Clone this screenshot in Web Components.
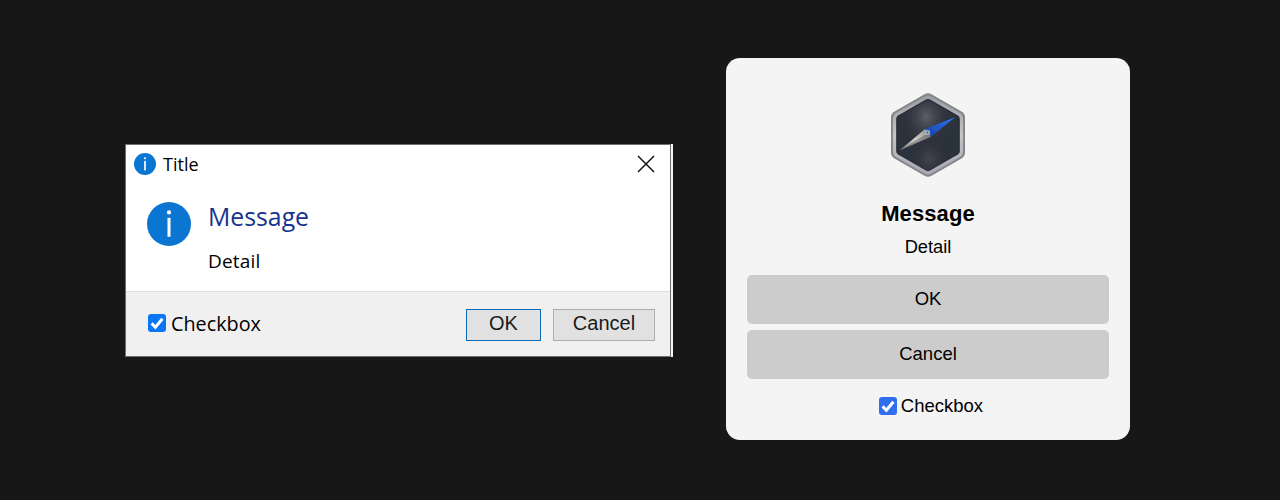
<!DOCTYPE html>
<html>
<head>
<meta charset="utf-8">
<title>Message box</title>
<style>
    html, body { margin: 0; height: 100%; }
    body {
        width: 1280px;
        height: 500px;
        overflow: hidden;
        background: #171717;
        display: flex;
        align-items: flex-start;
        gap: 53px;
        padding-left: 125px;
        box-sizing: border-box;
    }
</style>
</head>
<body>
<win-dialog title-text="Title" message="Message" detail="Detail" check="Checkbox"></win-dialog>
<mac-dialog message="Message" detail="Detail" check="Checkbox"></mac-dialog>

<script>
const INFO_ICON = (size, stem) => `
    <svg width="${size}" height="${size}" viewBox="0 0 44 44" style="display:block;flex:none">
        <circle cx="22" cy="22" r="22" fill="#0a76d1"/>
        <circle cx="22" cy="10.4" r="2.1" fill="#fff"/>
        <rect x="${22 - stem / 2}" y="15.8" width="${stem}" height="19" fill="#fff"/>
    </svg>`;

class TickBox extends HTMLElement {
    constructor() {
        super();
        this.attachShadow({ mode: 'open' });
        this.shadowRoot.innerHTML = `
            <style>
                :host {
                    display: inline-flex;
                    align-items: center;
                    gap: var(--tick-gap, 6px);
                }
                .box {
                    width: 18px;
                    height: 18px;
                    border-radius: 3px;
                    background: var(--tick-color, #0a75f5);
                    flex: none;
                }
                svg { display: block; }
            </style>
            <span class="box">
                <svg width="18" height="18" viewBox="0 0 18 18">
                    <path d="M3.6 9.4 L7.4 13.2 L14.4 4.8" fill="none" stroke="#fff" stroke-width="3"/>
                </svg>
            </span>
            <slot></slot>`;
    }
}
customElements.define('tick-box', TickBox);

class WinButton extends HTMLElement {
    constructor() {
        super();
        this.attachShadow({ mode: 'open' });
        this.shadowRoot.innerHTML = `
            <style>
                :host {
                    display: flex;
                    align-items: center;
                    justify-content: center;
                    box-sizing: border-box;
                    height: 32px;
                    padding-bottom: 3px;
                    background: #e1e1e1;
                    border: 1px solid #adadad;
                    font: 20px "Liberation Sans", Arial, sans-serif;
                    color: #1a1a1a;
                }
                :host([default]) { border-color: #0a6cb8; }
            </style>
            <slot></slot>`;
    }
}
customElements.define('win-button', WinButton);

class WinDialog extends HTMLElement {
    constructor() {
        super();
        this.attachShadow({ mode: 'open' });
        this.shadowRoot.innerHTML = `
            <style>
                :host {
                    display: block;
                    box-sizing: border-box;
                    width: 548px;
                    height: 213px;
                    margin-top: 144px;
                    padding-right: 2px;
                    background: #f6f6f6;
                    font-family: "Open Sans", "Noto Sans", sans-serif;
                    color: #000;
                }
                .frame {
                    height: 100%;
                    box-sizing: border-box;
                    background: #fff;
                    border: 1px solid #6e6e6e;
                }
                .title {
                    display: flex;
                    align-items: center;
                    height: 38px;
                    padding: 0 15px 0 8px;
                }
                .title span {
                    flex: 1;
                    margin-left: 7px;
                    font-size: 18px;
                    letter-spacing: 0.05px;
                    padding-bottom: 1px;
                }
                .main {
                    display: flex;
                    height: 108px;
                    box-sizing: border-box;
                    padding: 19px 0 0 21px;
                    gap: 17px;
                }
                .text { margin-top: -2px; }
                .msg {
                    font-size: 24.8px;
                    line-height: 32px;
                    color: #17348f;
                }
                .detail {
                    margin-top: 17px;
                    font-size: 19px;
                    line-height: 24px;
                    letter-spacing: 0.2px;
                }
                .foot {
                    display: flex;
                    align-items: center;
                    height: 65px;
                    box-sizing: border-box;
                    background: #f0f0f0;
                    border-top: 1px solid #dcdcdc;
                    padding: 2px 15px 0 22px;
                }
                tick-box {
                    flex: 1;
                    margin-bottom: 4px;
                    font-size: 19.8px;
                    --tick-gap: 5px;
                }
                .ok { width: 75px; }
                .cancel { width: 102px; margin-left: 12px; }
            </style>
            <div class="frame">
                <div class="title">
                    ${INFO_ICON(22, 3.4)}
                    <span>${this.getAttribute('title-text')}</span>
                    <svg width="18" height="18" viewBox="0 0 18 18">
                        <path d="M1 1 L17 17 M17 1 L1 17" stroke="#111" stroke-width="1.5" fill="none"/>
                    </svg>
                </div>
                <div class="main">
                    ${INFO_ICON(44, 3)}
                    <div class="text">
                        <div class="msg">${this.getAttribute('message')}</div>
                        <div class="detail">${this.getAttribute('detail')}</div>
                    </div>
                </div>
                <div class="foot">
                    <tick-box>${this.getAttribute('check')}</tick-box>
                    <win-button class="ok" default>OK</win-button>
                    <win-button class="cancel">Cancel</win-button>
                </div>
            </div>`;
    }
}
customElements.define('win-dialog', WinDialog);

class CompassBadge extends HTMLElement {
    constructor() {
        super();
        this.attachShadow({ mode: 'open' });
        this.shadowRoot.innerHTML = `
            <style>
                :host { display: block; width: 76px; height: 86px; }
                svg { display: block; }
            </style>
            <svg width="76" height="86" viewBox="0 0 76 86">
                <defs>
                    <linearGradient id="rim" x1="0" y1="0" x2="0" y2="1">
                        <stop offset="0" stop-color="#9b9ca0"/>
                        <stop offset="0.5" stop-color="#c4c4c6"/>
                        <stop offset="1" stop-color="#a6a6b0"/>
                    </linearGradient>
                    <radialGradient id="glowTop" cx="0.47" cy="0.24" r="0.42">
                        <stop offset="0" stop-color="#5d6069"/>
                        <stop offset="1" stop-color="#30343e" stop-opacity="0"/>
                    </radialGradient>
                    <radialGradient id="glowLow" cx="0.52" cy="0.84" r="0.3">
                        <stop offset="0" stop-color="#43464f"/>
                        <stop offset="1" stop-color="#30343e" stop-opacity="0"/>
                    </radialGradient>
                    <linearGradient id="blue" x1="0" y1="1" x2="1" y2="0">
                        <stop offset="0" stop-color="#1a3fa6"/>
                        <stop offset="1" stop-color="#2c7af5"/>
                    </linearGradient>
                    <linearGradient id="steel" x1="1" y1="0" x2="0" y2="1">
                        <stop offset="0" stop-color="#8a8b8e"/>
                        <stop offset="0.5" stop-color="#d0cdc6"/>
                        <stop offset="1" stop-color="#85837e"/>
                    </linearGradient>
                    <filter id="soft"><feGaussianBlur stdDeviation="0.7"/></filter>
                </defs>
                <g filter="url(#soft)">
                    <path d="M34.5 2.2 Q38 0.5 41.5 2.2 L71.5 19.6 Q75 21.6 75 25.5 L75 60.5 Q75 64.4 71.5 66.4 L41.5 83.8 Q38 85.5 34.5 83.8 L4.5 66.4 Q1 64.4 1 60.5 L1 25.5 Q1 21.6 4.5 19.6 Z" fill="#85868c"/>
                    <path d="M35.5 4 Q38 2.8 40.5 4 L70 21 Q73 22.8 73 26 L73 60 Q73 63.2 70 65 L40.5 82 Q38 83.2 35.5 82 L6 65 Q3 63.2 3 60 L3 26 Q3 22.8 6 21 Z" fill="url(#rim)"/>
                    <path d="M36 7.4 Q38 6.4 40 7.4 L67.8 23.4 Q69.8 24.6 69.8 27 L69.8 59 Q69.8 61.4 67.8 62.6 L40 78.6 Q38 79.6 36 78.6 L8.2 62.6 Q6.2 61.4 6.2 59 L6.2 27 Q6.2 24.6 8.2 23.4 Z" fill="#23262f"/>
                    <path d="M36 8.6 Q38 7.6 40 8.6 L67 24.2 Q68.8 25.3 68.8 27.4 L68.8 58.6 Q68.8 60.7 67 61.8 L40 77.4 Q38 78.4 36 77.4 L9 61.8 Q7.2 60.7 7.2 58.6 L7.2 27.4 Q7.2 25.3 9 24.2 Z" fill="#2c303a"/>
                    <path d="M36 8.6 Q38 7.6 40 8.6 L67 24.2 Q68.8 25.3 68.8 27.4 L68.8 58.6 Q68.8 60.7 67 61.8 L40 77.4 Q38 78.4 36 77.4 L9 61.8 Q7.2 60.7 7.2 58.6 L7.2 27.4 Q7.2 25.3 9 24.2 Z" fill="url(#glowTop)"/>
                    <path d="M36 8.6 Q38 7.6 40 8.6 L67 24.2 Q68.8 25.3 68.8 27.4 L68.8 58.6 Q68.8 60.7 67 61.8 L40 77.4 Q38 78.4 36 77.4 L9 61.8 Q7.2 60.7 7.2 58.6 L7.2 27.4 Q7.2 25.3 9 24.2 Z" fill="url(#glowLow)"/>
                    <path d="M35 37 L65.5 25 L41 44.5 Z" fill="url(#blue)"/>
                    <path d="M35 37 L41 44.5 L9.5 58.5 Z" fill="url(#steel)"/>
                    <path d="M38 41 L41 44.5 L9.5 58.5 Z" fill="#4c4c50" opacity="0.45"/>
                    <circle cx="37.5" cy="40.5" r="2.6" fill="#aab4be"/>
                    <circle cx="37.5" cy="40.5" r="1" fill="#46587a"/>
                </g>
            </svg>`;
    }
}
customElements.define('compass-badge', CompassBadge);

class MacDialog extends HTMLElement {
    constructor() {
        super();
        this.attachShadow({ mode: 'open' });
        this.shadowRoot.innerHTML = `
            <style>
                :host {
                    display: flex;
                    flex-direction: column;
                    align-items: center;
                    box-sizing: border-box;
                    width: 404px;
                    height: 382px;
                    margin-top: 58px;
                    padding: 34px 21px 0;
                    background: #f4f4f4;
                    border-radius: 14px;
                    font-family: "Liberation Sans", Arial, sans-serif;
                    color: #000;
                }
                .msg {
                    margin-top: 22px;
                    font-size: 22px;
                    font-weight: bold;
                    line-height: 28px;
                    letter-spacing: 0.1px;
                }
                .detail {
                    margin-top: 7px;
                    font-size: 18.3px;
                    line-height: 24px;
                }
                .btn {
                    display: flex;
                    align-items: center;
                    justify-content: center;
                    align-self: stretch;
                    height: 49px;
                    padding-bottom: 2px;
                    box-sizing: border-box;
                    background: #cccccc;
                    border-radius: 5px;
                    font-size: 18.5px;
                }
                .btn.first { margin-top: 16px; }
                .btn.second { margin-top: 6px; }
                tick-box {
                    margin: 16px 0 0 6px;
                    font-size: 18.5px;
                    --tick-color: #2f6fed;
                    --tick-gap: 4px;
                }
            </style>
            <compass-badge></compass-badge>
            <div class="msg">${this.getAttribute('message')}</div>
            <div class="detail">${this.getAttribute('detail')}</div>
            <div class="btn first">OK</div>
            <div class="btn second">Cancel</div>
            <tick-box>${this.getAttribute('check')}</tick-box>`;
    }
}
customElements.define('mac-dialog', MacDialog);
</script>
</body>
</html>
